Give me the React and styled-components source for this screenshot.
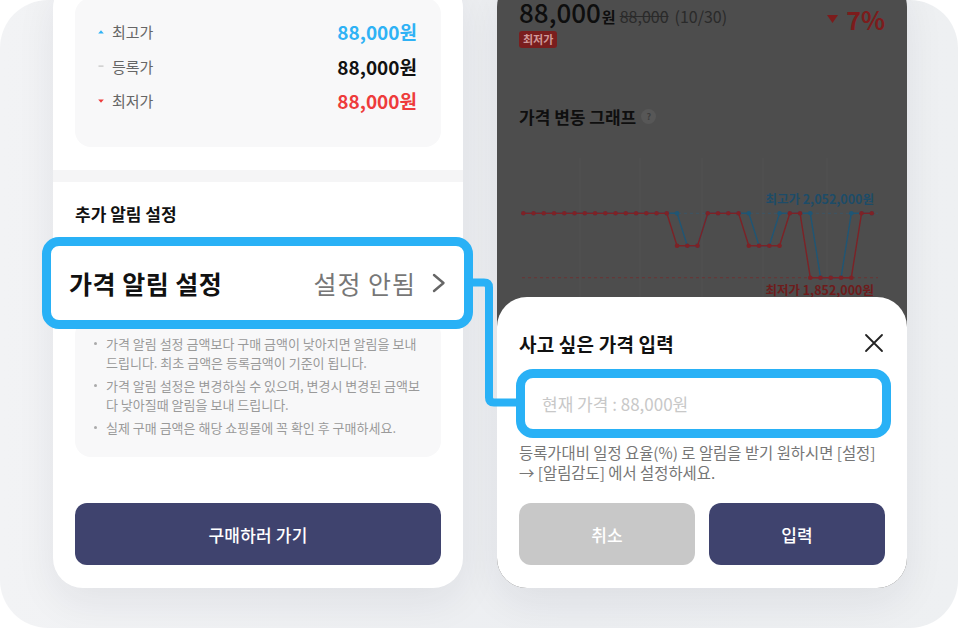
import React from 'react'
import styled, { createGlobalStyle } from 'styled-components'

const BLUE = '#29b1f6'
const NAVY = '#3f436e'

const GlobalStyle = createGlobalStyle`
  html, body {
    margin: 0;
    padding: 0;
    background: #fff;
  }
  body {
    font-family: "Noto Sans CJK KR", "Noto Sans", sans-serif;
    color: #111;
  }
  * {
    box-sizing: border-box;
  }
`

const Frame = styled.div`
  position: relative;
  width: 958px;
  height: 628px;
  border-radius: 48px;
  background: linear-gradient(90deg, #f2f3f5 0%, #eceef1 60%, #eef0f2 100%);
  overflow: hidden;
  display: flex;
  align-items: flex-end;
  gap: 34px;
  padding: 0 0 40px 53px;
`

const Card = styled.div`
  position: relative;
  flex: 0 0 410px;
  width: 410px;
  border-radius: 30px;
  background: ${({ $dim }) => ($dim ? '#4d4d4d' : '#fff')};
  box-shadow: 0 14px 40px rgba(30, 35, 50, 0.07);
  display: flex;
  flex-direction: column;
`

const Section = styled.div`
  padding: ${({ $first }) => ($first ? '20px 22px 23px' : '21px 22px 23px')};
  display: flex;
  flex-direction: column;
`

const Band = styled.div`
  height: 12px;
  background: #f5f5f6;
`

const PriceBox = styled.div`
  background: #f8f8f9;
  border-radius: 16px;
  padding: 17px 24px 29px 23px;
`

const PriceRow = styled.div`
  height: 34.5px;
  display: flex;
  align-items: center;
  justify-content: space-between;
`

const Label = styled.span`
  display: flex;
  align-items: center;
  gap: 8px;
  font-size: 15px;
  color: #666;
`

const toneColor = {
  up: '#2fb2f5',
  mid: '#111',
  down: '#ee3b3b'
}

const Value = styled.span`
  font-size: 19px;
  font-weight: 700;
  color: ${({ $tone }) => toneColor[$tone]};
`

const Marker = ({ kind }) => (
  <svg width="6" height="6" viewBox="0 0 6 6">
    {kind === 'up' && <path d="M3 1.2 L5.8 4.6 H0.2 Z" fill="#2fb2f5" />}
    {kind === 'mid' && <rect x="0.5" y="2.5" width="5" height="1.2" fill="#c4c4c4" />}
    {kind === 'down' && <path d="M3 4.8 L5.8 1.4 H0.2 Z" fill="#ee3b3b" />}
  </svg>
)

const SectionTitle = styled.div`
  font-size: 17px;
  font-weight: 700;
  line-height: 22px;
  margin-bottom: 12px;
`

const Highlight = styled.div`
  position: relative;
  z-index: 1;
  margin: 0 -32px 0 -33px;
  height: 92px;
  border: 9px solid ${BLUE};
  border-radius: 17px;
  background: #fff;
  display: flex;
  align-items: center;
  justify-content: space-between;
  padding: 0 18px 0 18px;
`

const BigTitle = styled.span`
  font-size: 25px;
  font-weight: 700;
  letter-spacing: 0.5px;
`

const BigStatus = styled.span`
  display: flex;
  align-items: center;
  gap: 16px;
  font-size: 25px;
  color: #777;
  letter-spacing: 1px;
`

const Notes = styled.ul`
  margin: -10px 0 0;
  list-style: none;
  background: #f8f8f9;
  border-radius: 16px;
  padding: 14.5px 17px 20.5px 19px;
`

const Note = styled.li`
  position: relative;
  padding-left: 12px;
  font-size: 13px;
  line-height: 19px;
  color: #9a9a9a;
  word-break: break-all;
  & + & {
    margin-top: 4px;
  }
  &::before {
    content: '';
    position: absolute;
    left: 0;
    top: 8px;
    width: 3px;
    height: 3px;
    border-radius: 50%;
    background: #aaa;
  }
`

const Button = styled.button`
  height: 62px;
  border: none;
  border-radius: 12px;
  background: ${({ $muted }) => ($muted ? '#c8c8c8' : NAVY)};
  color: #fff;
  font-family: inherit;
  font-size: 17px;
  font-weight: 500;
  letter-spacing: 0.2px;
  margin-top: ${({ $gap }) => $gap || 0}px;
`

const DimArea = styled.div`
  padding: 20px 22px 0;
  display: flex;
  flex-direction: column;
`

const PriceHead = styled.div`
  height: 30px;
  display: flex;
  align-items: baseline;
  justify-content: space-between;
`

const Now = styled.span`
  font-size: 26px;
  font-weight: 500;
  color: #0e0e0e;
  line-height: 30px;
`

const Won = styled.span`
  font-size: 15px;
  font-weight: 700;
  color: #0e0e0e;
  margin-left: 1px;
`

const Old = styled.span`
  font-size: 16px;
  color: #2a2a2a;
  margin-left: ${({ $gap }) => $gap}px;
  text-decoration: ${({ $strike }) => ($strike ? 'line-through' : 'none')};
`

const Drop = styled.span`
  display: flex;
  align-items: center;
  gap: 8px;
  font-size: 25px;
  font-weight: 700;
  color: #7c1c1c;
  line-height: 30px;
`

const Badge = styled.span`
  align-self: flex-start;
  margin-top: 4px;
  height: 17px;
  padding: 0 4px;
  border-radius: 3px;
  background: #7a1e1e;
  color: #cf9a9a;
  font-size: 11px;
  font-weight: 700;
  line-height: 17px;
`

const GraphTitle = styled.div`
  margin-top: 57px;
  height: 22px;
  display: flex;
  align-items: center;
  gap: 5px;
  font-size: 17px;
  font-weight: 700;
  color: #0f0f0f;
`

const Help = styled.span`
  width: 15px;
  height: 15px;
  border-radius: 50%;
  background: #575757;
  color: #3c3c3c;
  font-size: 9px;
  font-weight: 700;
  display: flex;
  align-items: center;
  justify-content: center;
`

const Chart = styled.svg`
  display: block;
  margin-top: 23px;
`

const Sheet = styled.div`
  background: #fff;
  border-radius: 30px;
  padding: 33px 22px 23px;
  display: flex;
  flex-direction: column;
`

const SheetHead = styled.div`
  height: 26px;
  display: flex;
  align-items: center;
  justify-content: space-between;
`

const SheetTitle = styled.span`
  font-size: 19px;
  font-weight: 700;
  letter-spacing: 0.2px;
`

const InputFrame = styled.div`
  margin: 13px -6px 0 -3px;
  height: 69px;
  border: 9px solid ${BLUE};
  border-radius: 17px;
  padding-left: 17px;
  display: flex;
  align-items: center;
`

const PriceInput = styled.input`
  width: 100%;
  border: none;
  outline: none;
  background: transparent;
  font-family: inherit;
  font-size: 17px;
  color: #333;
  padding: 0;
  &::placeholder {
    color: #c8c8c8;
  }
`

const HelpText = styled.p`
  margin: 4px 0 0;
  font-size: 15.4px;
  line-height: 20px;
  color: #767676;
  word-break: keep-all;
`

const ButtonRow = styled.div`
  margin-top: 21px;
  display: grid;
  grid-template-columns: 1fr 1fr;
  gap: 14px;
`

const Connector = styled.svg`
  position: absolute;
  left: 0;
  top: 0;
  pointer-events: none;
  z-index: 2;
`

const red = 'HHHHHHHHHHHHHHHMMMHHHHMMMMHHLLLLLHH'
const blue = 'HHHHHHHHHHHHHHHHMMHHHHHMMHHHHLLLHHH'
const levelY = { H: 63.3, M: 95.7, L: 127.7 }
const toPoints = (series) =>
  series.split('').map((lv, i) => [4.3 + 10.25 * i, levelY[lv]])

const Series = ({ data, color }) => {
  const pts = toPoints(data)
  return (
    <g>
      <polyline
        points={pts.map((p) => p.join(',')).join(' ')}
        fill="none"
        stroke={color}
        strokeWidth="1.4"
      />
      {pts.map(([x, y], i) => (
        <circle key={i} cx={x} cy={y} r="2.3" fill={color} />
      ))}
    </g>
  )
}

const PriceChart = () => (
  <Chart width="366" height="147" viewBox="0 0 366 147">
    {[61, 121, 183, 244, 308].map((x) => (
      <line key={x} x1={x} y1="8" x2={x} y2="147" stroke="#525252" strokeWidth="1" />
    ))}
    <line x1="3" y1="63.3" x2="359" y2="63.3" stroke="#3d5666" strokeDasharray="3 3" />
    <line x1="3" y1="127.7" x2="359" y2="127.7" stroke="#6a3434" strokeDasharray="3 3" />
    <Series data={blue} color="#1f5675" />
    <Series data={red} color="#7d2226" />
    <text x="355" y="54" textAnchor="end" fontSize="12.5" fontWeight="700" fill="#1d4c68"
      fontFamily='"Noto Sans CJK KR", sans-serif'>최고가 2,052,000원</text>
    <text x="355" y="145" textAnchor="end" fontSize="12.5" fontWeight="700" fill="#6e1c1c"
      fontFamily='"Noto Sans CJK KR", sans-serif'>최저가 1,852,000원</text>
  </Chart>
)

const Chevron = () => (
  <svg width="14" height="20" viewBox="0 0 14 20">
    <path d="M2 2 L11.5 10 L2 18" fill="none" stroke="#666" strokeWidth="2.4" strokeLinecap="round" strokeLinejoin="round" />
  </svg>
)

const CloseIcon = () => (
  <svg width="20" height="20" viewBox="0 0 20 20" style={{ marginRight: 1 }}>
    <path d="M2 2 L18 18 M18 2 L2 18" stroke="#222" strokeWidth="1.8" strokeLinecap="round" />
  </svg>
)

const prices = [
  { kind: 'up', label: '최고가' },
  { kind: 'mid', label: '등록가' },
  { kind: 'down', label: '최저가' }
]

const notes = [
  '가격 알림 설정 금액보다 구매 금액이 낮아지면 알림을 보내 드립니다. 최초 금액은 등록금액이 기준이 됩니다.',
  '가격 알림 설정은 변경하실 수 있으며, 변경시 변경된 금액보다 낮아질때 알림을 보내 드립니다.',
  '실제 구매 금액은 해당 쇼핑몰에 꼭 확인 후 구매하세요.'
]

const App = () => (
  <>
    <GlobalStyle />
    <Frame>
      <Card>
        <Section $first>
          <PriceBox>
            {prices.map((p) => (
              <PriceRow key={p.kind}>
                <Label><Marker kind={p.kind} />{p.label}</Label>
                <Value $tone={p.kind}>88,000원</Value>
              </PriceRow>
            ))}
          </PriceBox>
        </Section>
        <Band />
        <Section>
          <SectionTitle>추가 알림 설정</SectionTitle>
          <Highlight>
            <BigTitle>가격 알림 설정</BigTitle>
            <BigStatus>설정 안됨 <Chevron /></BigStatus>
          </Highlight>
          <Notes>
            {notes.map((n) => <Note key={n}>{n}</Note>)}
          </Notes>
          <Button $gap={46}>구매하러 가기</Button>
        </Section>
      </Card>

      <Card $dim>
        <DimArea>
          <PriceHead>
            <span>
              <Now>88,000</Now><Won>원</Won>
              <Old $gap={4} $strike>88,000</Old>
              <Old $gap={6}>(10/30)</Old>
            </span>
            <Drop>
              <svg width="11" height="8" viewBox="0 0 11 8"><path d="M0 0 H11 L5.5 8 Z" fill="#7c1c1c" /></svg>
              7%
            </Drop>
          </PriceHead>
          <Badge>최저가</Badge>
          <GraphTitle>가격 변동 그래프 <Help>?</Help></GraphTitle>
          <PriceChart />
        </DimArea>
        <Sheet>
          <SheetHead>
            <SheetTitle>사고 싶은 가격 입력</SheetTitle>
            <CloseIcon />
          </SheetHead>
          <InputFrame>
            <PriceInput placeholder="현재 가격 : 88,000원" />
          </InputFrame>
          <HelpText>
            등록가대비 일정 요율(%) 로 알림을 받기 원하시면 [설정] → [알림감도] 에서 설정하세요.
          </HelpText>
          <ButtonRow>
            <Button $muted>취소</Button>
            <Button>입력</Button>
          </ButtonRow>
        </Sheet>
      </Card>

      <Connector width="958" height="628" viewBox="0 0 958 628">
        <path
          d="M466 282.5 H484 Q489 282.5 489 287.5 V397.5 Q489 402.5 494 402.5 H521"
          fill="none"
          stroke={BLUE}
          strokeWidth="8"
        />
      </Connector>
    </Frame>
  </>
)

export default App
